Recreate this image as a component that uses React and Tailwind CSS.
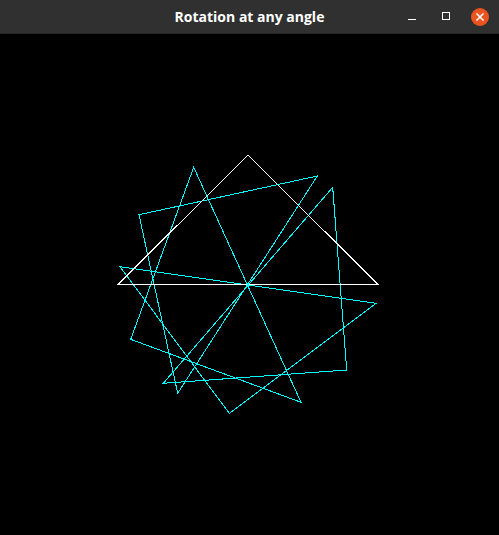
import React from "react";

const CENTER = [248, 284];

const white = [
  [248, 155],
  [118.5, 284],
  [377.5, 284],
];

// rotated copies measured from the screen
const cyan = [
  [[120, 266.7], [376, 303.3], [229.3, 413.3]],
  [[193.7, 167.3], [301, 402.3], [130.7, 339.3]],
  [[317.3, 176], [177.7, 393.3], [139, 214.7]],
  [[332.7, 187.3], [163.3, 383.3], [346.7, 370]],
];

const toPoints = (tri) => tri.map(([x, y]) => `${x},${y - 34}`).join(" ");

const TitleBar = () => (
  <div className="h-[34px] bg-[#303030] flex items-center relative border-b border-[#262626]">
    <div
      className="flex-1 text-center text-white text-[14px] font-bold"
      style={{ fontFamily: '"Open Sans", "Noto Sans", sans-serif' }}
    >
      Rotation at any angle
    </div>
    <div className="absolute right-[10px] top-0 h-full flex items-center">
      <div className="w-[8px] h-[1px] bg-white mt-[5px]" />
      <div className="w-[8px] h-[8px] border border-white ml-[26px] mb-[1px]" />
      <div className="w-[18px] h-[18px] rounded-full bg-[#E95420] flex items-center justify-center ml-[21px]">
        <svg width="10" height="10" viewBox="0 0 10 10">
          <path d="M1.5 1.5 L8.5 8.5 M8.5 1.5 L1.5 8.5" stroke="white" strokeWidth="1.6" />
        </svg>
      </div>
    </div>
  </div>
);

const App = () => {
  return (
    <div className="w-[499px] h-[535px] bg-black flex flex-col overflow-hidden">
      <TitleBar />
      <div className="flex-1 bg-black">
        <svg width="499" height="501" viewBox="0 0 499 501" shapeRendering="crispEdges">
          {cyan.map((tri, i) => (
            <polygon key={i} points={toPoints(tri)} fill="none" stroke="#00FFFF" strokeWidth="1" />
          ))}
          <polygon points={toPoints(white)} fill="none" stroke="#FFFFFF" strokeWidth="1" />
          <rect x={CENTER[0] - 1} y={CENTER[1] - 35} width="2" height="2" fill="#00FFFF" />
        </svg>
      </div>
    </div>
  );
};

export default App;
